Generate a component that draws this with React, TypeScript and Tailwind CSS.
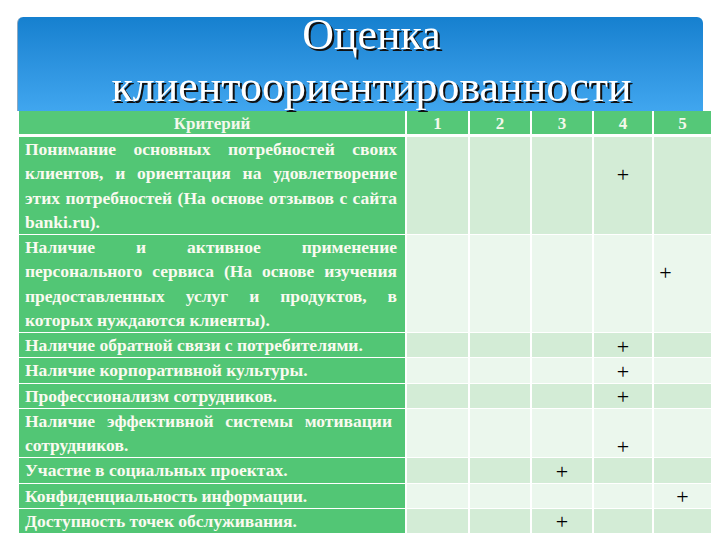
import React from "react";

type Row = {
  lines: string[];
  col: number;
  line?: number;
  dx?: number;
};

const rows: Row[] = [
  {
    lines: [
      "Понимание основных потребностей своих",
      "клиентов, и ориентация на удовлетворение",
      "этих потребностей (На основе отзывов с сайта",
      "banki.ru).",
    ],
    col: 4,
    line: 1,
  },
  {
    lines: [
      "Наличие и активное применение",
      "персонального сервиса (На основе изучения",
      "предоставленных услуг и продуктов, в",
      "которых нуждаются клиенты).",
    ],
    col: 5,
    line: 1,
    dx: -34,
  },
  { lines: ["Наличие обратной связи с потребителями."], col: 4 },
  { lines: ["Наличие корпоративной культуры."], col: 4 },
  { lines: ["Профессионализм сотрудников."], col: 4 },
  {
    lines: ["Наличие эффективной системы мотивации", "сотрудников."],
    col: 4,
    line: 1,
  },
  { lines: ["Участие в социальных проектах."], col: 3 },
  { lines: ["Конфиденциальность информации."], col: 5 },
  { lines: ["Доступность точек обслуживания."], col: 3 },
];

function Line({ text, justify, extraPad }: { text: string; justify: boolean; extraPad?: boolean }) {
  if (!justify) {
    return <div className="h-[24.25px] whitespace-nowrap">{text}</div>;
  }
  const words = text.split(" ");
  return (
    <div className={extraPad ? "h-[24.25px] flex justify-between whitespace-nowrap pr-[5px]" : "h-[24.25px] flex justify-between whitespace-nowrap"}>
      {words.map((w, i) => (
        <span key={i}>{w}</span>
      ))}
    </div>
  );
}

export default function App() {
  return (
    <div className="font-['Liberation_Serif'] w-[720px] h-[540px] bg-white overflow-hidden pt-[17px]">
      <div className="ml-[17px] w-[686px] h-[94px] rounded-t-[6px] bg-gradient-to-b from-[#1580cf] to-[#40a6ef] relative z-10 flex flex-col border-l border-[#8fa9c0]">
        <div className="font-['Liberation_Serif'] -mt-[8px] pl-[22px] text-center text-[44px] leading-[52px] text-white drop-shadow-[2px_2px_0_#111]">
          <div>Оценка</div>
          <div>клиентоориентированности</div>
        </div>
      </div>

      <div className="ml-[19px] w-[692px]">
        <div className="font-['Liberation_Serif'] grid grid-cols-[386px_61px_60px_60px_58px_57px] gap-x-[2px] h-[23px] text-[#f4f8ec]">
          <div className="bg-[#55c878] flex items-center justify-center text-[17px] font-bold leading-none pt-[2px]">
            Критерий
          </div>
          {["1", "2", "3", "4", "5"].map((n) => (
            <div key={n} className="bg-[#55c878] flex items-center justify-center text-[17px] font-bold leading-none pt-[2px]">
              {n}
            </div>
          ))}
        </div>

        <div className="font-['Liberation_Serif'] mt-[3px] grid grid-cols-[386px_61px_60px_60px_58px_57px] gap-x-[2px] gap-y-[1px] leading-[24.25px]">
          {rows.map((r, ri) => {
            const light = ri % 2 === 1;
            const cellBg = light ? "bg-[#ebf7ed] flex flex-col" : "bg-[#d3ecd6] flex flex-col";
            return (
              <React.Fragment key={ri}>
                <div className="bg-[#52c675] pl-[6px] pr-[8px] text-[17.5px] font-bold text-[#fafaf0]">
                  {r.lines.map((l, li) => (
                    <Line
                      key={li}
                      text={l}
                      justify={li < r.lines.length - 1}
                      extraPad={ri === 5 && li === 0}
                    />
                  ))}
                </div>
                {[1, 2, 3, 4, 5].map((c) => (
                  <div key={c} className={cellBg}>
                    {r.lines.map((_, li) => (
                      <div key={li} className="h-[24.25px] flex items-center justify-center">
                        {c === r.col && li === (r.line ?? 0) ? (
                          <span
                            className="text-[22px] leading-none text-black font-normal pt-[3px]"
                            style={r.dx ? { marginLeft: r.dx } : undefined}
                          >
                            +
                          </span>
                        ) : null}
                      </div>
                    ))}
                  </div>
                ))}
              </React.Fragment>
            );
          })}
        </div>
      </div>
    </div>
  );
}
